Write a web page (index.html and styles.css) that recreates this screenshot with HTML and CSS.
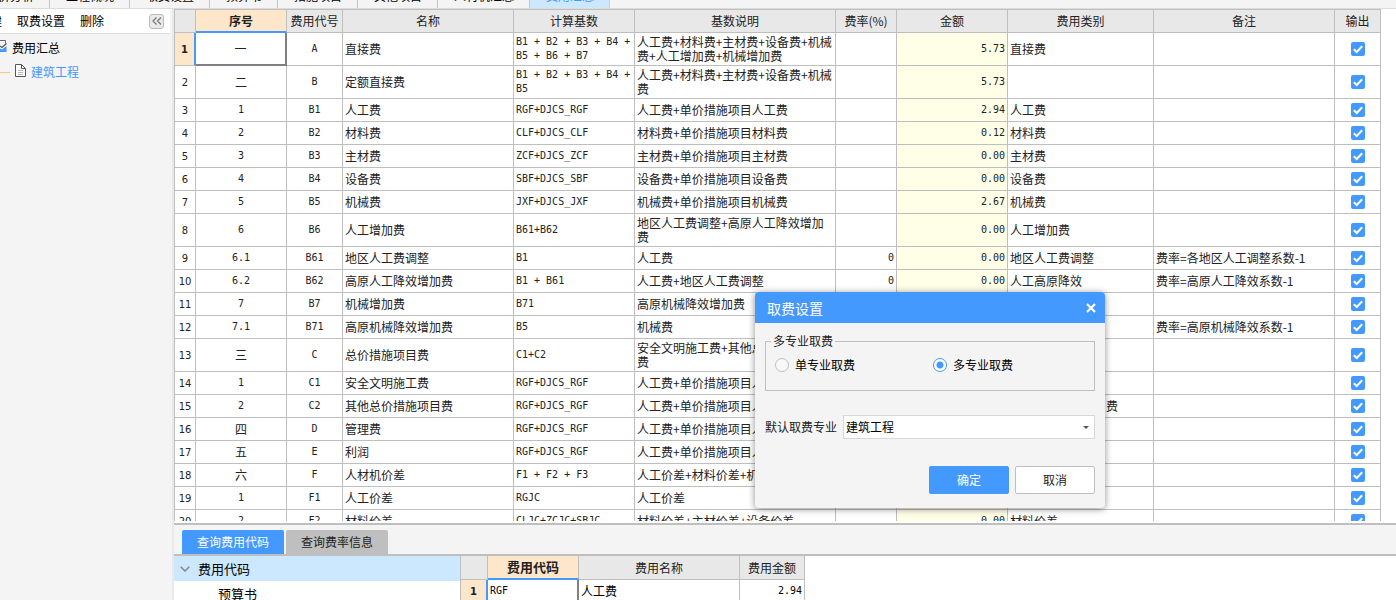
FILE: index.html
```html
<!DOCTYPE html>
<html lang="zh-CN">
<head>
<meta charset="utf-8">
<title>费用汇总</title>
<link rel="stylesheet" href="styles.css">
</head>
<body>
<div class="app">
  <nav class="tabs">
    <button>造价分析</button><button>工程概况</button><button>取费设置</button><button>预算书</button><button>措施项目</button><button>其他项目</button><button>人材机汇总</button><button class="active">费用汇总</button>
  </nav>
  <div class="body">
    <aside class="side">
      <div class="toolbar">
        <button>新建</button><button>取费设置</button><button>删除</button>
        <button class="fold" aria-label="收起"><svg width="10" height="8" viewBox="0 0 10 8"><path d="M4.500 .5 1 4l3.500 3.500M9 .5 5.500 4 9 7.500" fill="none" stroke="#777" stroke-width="1.200"/></svg></button>
      </div>
      <div class="tree-root"><svg width="8" height="14" viewBox="0 0 8 14"><path d="M0 1.500h5.500v3" fill="none" stroke="#666"/><path d="M0 9.500l2 1L6.500 7v6H0z" fill="#4499ff"/><path d="M0 7 2 8.500 6.500 4.500" fill="none" stroke="#555" stroke-width="1.200"/></svg><span>费用汇总</span></div>
      <div class="tree-leaf"><i></i><svg width="11" height="13" viewBox="0 0 11 13"><path d="M.5.5h6l4 4v8H.5z" fill="#fff" stroke="#555"/><path d="M6.500.5v4h4" fill="none" stroke="#555"/><path d="M3 6.500h5M3 8.500h5M3 10.500h5" fill="none" stroke="#bbb"/></svg><a href="#">建筑工程</a></div>
    </aside>
    <main class="main">
      <section class="upper">
        <table class="grid cost">
          <colgroup><col class="w-num"><col class="w-seq"><col class="w-code"><col class="w-name"><col class="w-base"><col class="w-desc"><col class="w-rate"><col class="w-amt"><col class="w-cat"><col class="w-note"><col class="w-out"></colgroup>
          <thead><tr><th></th><th class="cur">序号</th><th>费用代号</th><th>名称</th><th>计算基数</th><th>基数说明</th><th>费率(%)</th><th>金额</th><th>费用类别</th><th>备注</th><th>输出</th></tr></thead>
          <tbody>
          <tr class="tall"><th class="cur">1</th><td class="sel">一</td><td>A</td><td>直接费</td><td>B1 + B2 + B3 + B4 + B5 + B6 + B7</td><td>人工费+材料费+主材费+设备费+机械费+人工增加费+机械增加费</td><td></td><td>5.73</td><td>直接费</td><td></td><td><input type="checkbox" aria-label="输出 1" checked></td></tr>
          <tr class="tall"><th>2</th><td>二</td><td>B</td><td>定额直接费</td><td>B1 + B2 + B3 + B4 + B5</td><td>人工费+材料费+主材费+设备费+机械费</td><td></td><td>5.73</td><td></td><td></td><td><input type="checkbox" aria-label="输出 2" checked></td></tr>
          <tr><th>3</th><td class="n">1</td><td>B1</td><td>人工费</td><td>RGF+DJCS_RGF</td><td>人工费+单价措施项目人工费</td><td></td><td>2.94</td><td>人工费</td><td></td><td><input type="checkbox" aria-label="输出 3" checked></td></tr>
          <tr><th>4</th><td class="n">2</td><td>B2</td><td>材料费</td><td>CLF+DJCS_CLF</td><td>材料费+单价措施项目材料费</td><td></td><td>0.12</td><td>材料费</td><td></td><td><input type="checkbox" aria-label="输出 4" checked></td></tr>
          <tr><th>5</th><td class="n">3</td><td>B3</td><td>主材费</td><td>ZCF+DJCS_ZCF</td><td>主材费+单价措施项目主材费</td><td></td><td>0.00</td><td>主材费</td><td></td><td><input type="checkbox" aria-label="输出 5" checked></td></tr>
          <tr><th>6</th><td class="n">4</td><td>B4</td><td>设备费</td><td>SBF+DJCS_SBF</td><td>设备费+单价措施项目设备费</td><td></td><td>0.00</td><td>设备费</td><td></td><td><input type="checkbox" aria-label="输出 6" checked></td></tr>
          <tr><th>7</th><td class="n">5</td><td>B5</td><td>机械费</td><td>JXF+DJCS_JXF</td><td>机械费+单价措施项目机械费</td><td></td><td>2.67</td><td>机械费</td><td></td><td><input type="checkbox" aria-label="输出 7" checked></td></tr>
          <tr class="tall"><th>8</th><td class="n">6</td><td>B6</td><td>人工增加费</td><td>B61+B62</td><td>地区人工费调整+高原人工降效增加费</td><td></td><td>0.00</td><td>人工增加费</td><td></td><td><input type="checkbox" aria-label="输出 8" checked></td></tr>
          <tr><th>9</th><td class="n">6.1</td><td>B61</td><td>地区人工费调整</td><td>B1</td><td>人工费</td><td>0</td><td>0.00</td><td>地区人工费调整</td><td>费率=各地区人工调整系数-1</td><td><input type="checkbox" aria-label="输出 9" checked></td></tr>
          <tr><th>10</th><td class="n">6.2</td><td>B62</td><td>高原人工降效增加费</td><td>B1 + B61</td><td>人工费+地区人工费调整</td><td>0</td><td>0.00</td><td>人工高原降效</td><td>费率=高原人工降效系数-1</td><td><input type="checkbox" aria-label="输出 10" checked></td></tr>
          <tr><th>11</th><td class="n">7</td><td>B7</td><td>机械增加费</td><td>B71</td><td>高原机械降效增加费</td><td></td><td>0.00</td><td>机械增加费</td><td></td><td><input type="checkbox" aria-label="输出 11" checked></td></tr>
          <tr><th>12</th><td class="n">7.1</td><td>B71</td><td>高原机械降效增加费</td><td>B5</td><td>机械费</td><td>0</td><td>0.00</td><td>机械高原降效</td><td>费率=高原机械降效系数-1</td><td><input type="checkbox" aria-label="输出 12" checked></td></tr>
          <tr class="tall"><th>13</th><td>三</td><td>C</td><td>总价措施项目费</td><td>C1+C2</td><td>安全文明施工费+其他总价措施项目费</td><td></td><td>0.00</td><td>措施项目费</td><td></td><td><input type="checkbox" aria-label="输出 13" checked></td></tr>
          <tr><th>14</th><td class="n">1</td><td>C1</td><td>安全文明施工费</td><td>RGF+DJCS_RGF</td><td>人工费+单价措施项目人工费</td><td></td><td>0.00</td><td>安全文明施工费</td><td></td><td><input type="checkbox" aria-label="输出 14" checked></td></tr>
          <tr><th>15</th><td class="n">2</td><td>C2</td><td>其他总价措施项目费</td><td>RGF+DJCS_RGF</td><td>人工费+单价措施项目人工费</td><td></td><td>0.00</td><td>其他总价措施项目费</td><td></td><td><input type="checkbox" aria-label="输出 15" checked></td></tr>
          <tr><th>16</th><td>四</td><td>D</td><td>管理费</td><td>RGF+DJCS_RGF</td><td>人工费+单价措施项目人工费</td><td></td><td>0.00</td><td>管理费</td><td></td><td><input type="checkbox" aria-label="输出 16" checked></td></tr>
          <tr><th>17</th><td>五</td><td>E</td><td>利润</td><td>RGF+DJCS_RGF</td><td>人工费+单价措施项目人工费</td><td></td><td>0.00</td><td>利润</td><td></td><td><input type="checkbox" aria-label="输出 17" checked></td></tr>
          <tr><th>18</th><td>六</td><td>F</td><td>人材机价差</td><td>F1 + F2 + F3</td><td>人工价差+材料价差+机械价差</td><td></td><td>0.00</td><td>价差</td><td></td><td><input type="checkbox" aria-label="输出 18" checked></td></tr>
          <tr><th>19</th><td class="n">1</td><td>F1</td><td>人工价差</td><td>RGJC</td><td>人工价差</td><td></td><td>0.00</td><td>人工价差</td><td></td><td><input type="checkbox" aria-label="输出 19" checked></td></tr>
          <tr><th>20</th><td class="n">2</td><td>F2</td><td>材料价差</td><td>CLJC+ZCJC+SBJC</td><td>材料价差+主材价差+设备价差</td><td></td><td>0.00</td><td>材料价差</td><td></td><td><input type="checkbox" aria-label="输出 20" checked></td></tr>
          </tbody>
        </table>
      </section>
      <section class="lower">
        <div class="subtabs"><button class="active">查询费用代码</button><button>查询费率信息</button></div>
        <div class="split">
          <div class="codes">
            <div class="node open"><svg width="10" height="6" viewBox="0 0 10 6"><path d="M.7.7 5 5 9.300.7" fill="none" stroke="#888" stroke-width="1.500"/></svg>费用代码</div>
            <div class="node child">预算书</div>
          </div>
          <table class="grid values">
            <colgroup><col class="v-num"><col class="v-code"><col class="v-name"><col class="v-amt"></colgroup>
            <thead><tr><th></th><th class="cur">费用代码</th><th>费用名称</th><th>费用金额</th></tr></thead>
            <tbody><tr><th class="cur">1</th><td class="sel">RGF</td><td>人工费</td><td>2.94</td></tr></tbody>
          </table>
        </div>
      </section>
    </main>
  </div>
</div>

<form class="dialog" role="dialog" aria-label="取费设置">
  <header><span>取费设置</span><button type="button" aria-label="关闭"><svg width="10" height="10" viewBox="0 0 10 10"><path d="M1 1l8 8M9 1 1 9" stroke="#fff" stroke-width="2.200"/></svg></button></header>
  <div class="content">
    <fieldset>
      <legend>多专业取费</legend>
      <label><input type="radio" name="mode">单专业取费</label>
      <label><input type="radio" name="mode" checked>多专业取费</label>
    </fieldset>
    <div class="field"><label for="major">默认取费专业</label><select id="major"><option>建筑工程</option></select></div>
    <div class="actions"><button type="button" class="primary">确定</button><button type="button">取消</button></div>
  </div>
</form>
</body>
</html>
```
FILE: styles.css
```css
* { box-sizing: border-box; }
body {
  margin: 0;
  font: 12px/14px "Noto Sans CJK SC", sans-serif;
  color: #222;
  background: #fff;
}
button, select, input { font: inherit; color: inherit; margin: 0; }
button { padding: 0; border: 0; background: none; white-space: nowrap; }

.app { display: flex; flex-direction: column; height: 100vh; overflow: hidden; }
.tabs {
  display: flex;
  align-items: flex-end;
  height: 9px;
  flex: none;
  overflow: hidden;
  background: #f4f4f4;
  border-bottom: 1px solid #dcdcdc;
}
.tabs button { flex: none; height: 20px; line-height: 14px; padding: 0 15px 4px 16px; border-right: 1px solid #c4c4c4; color: #000; }
.tabs button:first-child { margin-left: -30px; }
.tabs .active { background: #cce8ff; color: #4499ff; border-color: #b9d6ee; }

.body { display: flex; flex: 1; min-height: 0; }
.side { width: 174px; flex: none; background: #f4f4f4; border-right: 2px solid #e9e9e9; overflow: hidden; color: #000; }
.toolbar {
  display: flex;
  align-items: center;
  gap: 15px;
  height: 25px;
  margin-right: 2px;
  padding-right: 6px;
  background: #fff;
  border-bottom: 1px solid #dcdcdc;
}
.toolbar button:first-child { margin-left: -22px; }
.toolbar .fold {
  display: grid;
  place-items: center;
  width: 15px;
  height: 15px;
  margin-left: auto;
  border: 1px solid #bbb;
  border-radius: 3px;
  background: #e9e9e9;
}
.tree-root, .tree-leaf { display: flex; align-items: center; height: 24px; }
.tree-root { gap: 4px; margin-top: 2px; }
.tree-root svg { margin-bottom: 4px; }
.tree-leaf i { width: 10px; height: 1px; margin-right: 5px; background: #ffc773; }
.tree-leaf svg { margin: 0 5px 4px 0; }
.tree-leaf a { color: #4499ff; text-decoration: none; }

.main { display: flex; flex-direction: column; flex: 1; min-width: 0; }
.upper { flex: 1; min-height: 0; overflow: hidden; }

.grid { border-collapse: separate; border-spacing: 0; table-layout: fixed; border-left: 1px solid #bfbfbf; }
.grid th, .grid td { height: 23px; padding: 0 2px; border: solid #bfbfbf; border-width: 0 1px 1px 0; font-weight: 400; text-align: left; background: #fff; }
.grid thead th { background: #e8e8e8; text-align: center; }
.grid tbody th { padding: 2px 0 0; text-align: center; font: 10px/14px "DejaVu Sans", sans-serif; }
.grid .cur, .grid tbody .cur { background: #fee6ca; font-weight: 700; }
.grid thead .cur { background: #fee6ca; border-bottom: 2px solid #4499ff; }
.grid tbody .cur { border-right: 2px solid #4499ff; }
.grid .sel { border-right: 2px solid #808080; border-bottom: 2px solid #808080; }

.cost { width: 1207px; border-top: 1px solid #bfbfbf; }
.cost .tall > * { height: 33px; }
.w-num { width: 21px; }
.w-seq { width: 91px; }
.w-code { width: 56px; }
.w-name { width: 171px; }
.w-base { width: 121px; }
.w-desc { width: 201px; }
.w-rate { width: 61px; }
.w-amt { width: 111px; }
.w-cat { width: 146px; }
.w-note { width: 181px; }
.w-out { width: 46px; }
.cost td:nth-child(2), .cost td:nth-child(3), .cost td:nth-child(11) { text-align: center; }
.cost .n, .cost td:nth-child(3), .cost td:nth-child(5), .cost td:nth-child(7), .cost td:nth-child(8),
.values .sel, .values td:nth-child(4) { font-family: "DejaVu Sans Mono", monospace; font-size: 10px; }
.cost td:nth-child(7), .cost td:nth-child(8), .values td:nth-child(4) { text-align: right; }
.cost td:nth-child(8) { background: #ffffe8; }

input[type="checkbox"] {
  display: block;
  width: 14px;
  height: 14px;
  margin: 0 auto;
  appearance: none;
  border-radius: 2px;
  background: #4499ff url("data:image/svg+xml,%3Csvg xmlns='http://www.w3.org/2000/svg' viewBox='0 0 14 14'%3E%3Cpath d='M2.800 7.200 5.700 10 11.200 4.200' fill='none' stroke='white' stroke-width='2'/%3E%3C/svg%3E");
}

.lower { flex: none; height: 77px; margin-top: 2px; border-top: 2px solid #bfbfbf; overflow: hidden; }
.subtabs { display: flex; align-items: flex-end; gap: 2px; height: 31px; padding-left: 8px; background: #f4f4f4; border-bottom: 2px solid #bfbfbf; }
.subtabs button { height: 24px; padding: 0 15px; border-radius: 2px 2px 0 0; background: #bfbfbf; }
.subtabs .active { background: #4499ff; color: #fff; }
.split { display: flex; align-items: flex-start; }
.codes { width: 286px; flex: none; font-size: 13px; color: #000; }
.node { display: flex; align-items: center; gap: 8px; height: 25px; padding-left: 6px; }
.open { background: #cce8ff; }
.child { padding-left: 44px; }
.values { width: 345px; }
.values .cur { font-size: 13px; }
.values tbody .cur { font-size: 10px; }
.values thead th { height: 24px; }
.values td { color: #000; }
.v-num { width: 27px; }
.v-code { width: 91px; }
.v-name { width: 161px; }
.v-amt { width: 65px; }

.dialog {
  position: absolute;
  left: 755px;
  top: 292px;
  width: 350px;
  border-radius: 4px;
  overflow: hidden;
  background: #f4f4f4;
  box-shadow: 0 1px 7px rgba(0, 0, 0, .45);
}
.dialog header { display: flex; justify-content: space-between; align-items: center; height: 31px; padding: 0 9px 0 12px; background: #4499ff; color: #fff; font-size: 14px; }
.dialog header button { display: grid; }
.content { padding: 11px 10px 14px; }
fieldset { display: grid; grid-template-columns: 1fr 1fr; column-gap: 6px; height: 57px; margin: 0; padding: 10px 9px 0; border: 1px solid #bfbfbf; color: #000; }
legend { margin-left: -4px; padding: 0 2px; color: #222; }
fieldset label { display: flex; align-items: flex-start; gap: 6px; }
input[type="radio"] { width: 14px; height: 14px; appearance: none; border: 1px solid #bfbfbf; border-radius: 50%; background: #f8f8f8; }
input[type="radio"]:checked { border-color: #4499ff; background: radial-gradient(circle, #4499ff 3px, #fff 4px); }
.field { display: flex; align-items: center; gap: 6px; margin-top: 24px; }
.field select {
  flex: 1;
  height: 24px;
  padding: 0 2px;
  appearance: none;
  border: 1px solid #d8d8d8;
  color: #000;
  background: #fff url("data:image/svg+xml,%3Csvg xmlns='http://www.w3.org/2000/svg' width='6' height='3'%3E%3Cpath d='M0 0h6L3 3z' fill='%23555'/%3E%3C/svg%3E") no-repeat right 5px center;
}
.actions { display: flex; justify-content: flex-end; gap: 6px; margin-top: 27px; }
.actions button { width: 80px; height: 28px; border: 1px solid #bfbfbf; border-radius: 2px; background: #fff; }
.actions .primary { border-color: #4499ff; background: #4499ff; color: #fff; }
```
